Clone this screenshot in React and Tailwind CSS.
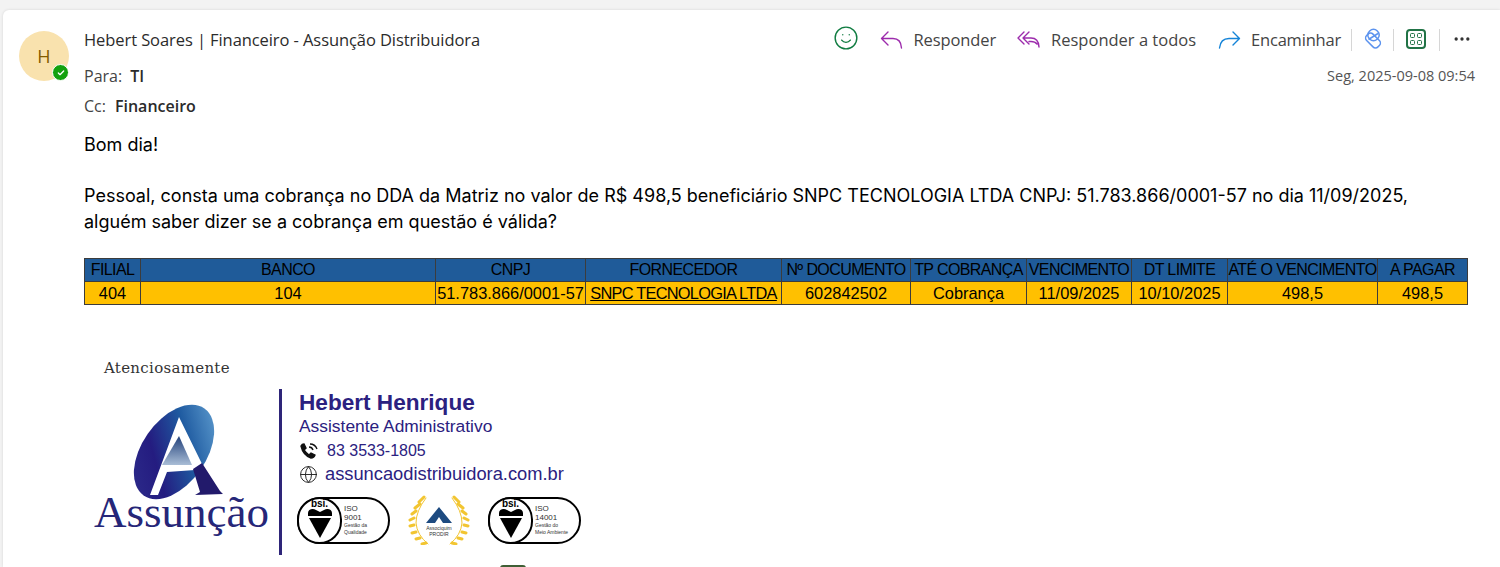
import React from "react";
import { Smile, MoreHorizontal, Check, Globe } from "lucide-react";

const headers = [
  ["FILIAL", "w-[56px]"],
  ["BANCO", "w-[295px]"],
  ["CNPJ", "w-[150px]"],
  ["FORNECEDOR", "w-[196px]"],
  ["Nº DOCUMENTO", "w-[129px]"],
  ["TP COBRANÇA", "w-[116px]"],
  ["VENCIMENTO", "w-[105px]"],
  ["DT LIMITE", "w-[96px]"],
  ["ATÉ O VENCIMENTO", "w-[150px]"],
  ["A PAGAR", "w-[90px]"],
];

const row = ["404", "104", "51.783.866/0001-57", "SNPC TECNOLOGIA LTDA", "602842502", "Cobrança", "11/09/2025", "10/10/2025", "498,5", "498,5"];

function ReplyIcon() {
  return (
    <svg width="24" height="20" viewBox="0 0 24 20" fill="none" stroke="#9c2bac" strokeWidth="1.4" strokeLinecap="round" strokeLinejoin="round">
      <path d="M8 2 L1.5 8.5 L8 15 M1.5 8.5 H13 Q21 8.5 21.5 18" />
    </svg>
  );
}

function ReplyAllIcon() {
  return (
    <svg width="24" height="20" viewBox="0 0 24 20" fill="none" stroke="#9c2bac" strokeWidth="1.4" strokeLinecap="round" strokeLinejoin="round">
      <path d="M7 2 L1 8 L7 14 M12 2 L6 8 L12 14 M6 8 H14 Q21.5 8 22 17 M12 11.5 H14 Q18 11.5 20 14" />
    </svg>
  );
}

function ForwardIcon() {
  return (
    <svg width="24" height="20" viewBox="0 0 24 20" fill="none" stroke="#1584d8" strokeWidth="1.4" strokeLinecap="round" strokeLinejoin="round">
      <path d="M15 2 L21.5 8.5 L15 15 M21.5 8.5 H11 Q2.5 8.5 1.5 18" />
    </svg>
  );
}

function LoopIcon() {
  return (
    <svg width="22" height="22" viewBox="0 0 22 22" fill="none" stroke="#5c93ee" strokeWidth="1.5" strokeLinejoin="round">
      <rect x="6" y="1.5" width="11" height="11" rx="5" transform="rotate(45 11.5 7)" />
      <rect x="3" y="8" width="16" height="9" rx="3.5" transform="rotate(45 11 12.5)" />
      <path d="M6.5 11.5 L16 5.5" />
    </svg>
  );
}

function AppsIcon() {
  return (
    <div className="h-[20px] w-[20px] rounded-[4px] border-2 border-[#217346] grid grid-cols-2 gap-[2px] p-[2px]">
      <span className="rounded-[1.5px] border-[1.5px] border-[#217346]" />
      <span className="rounded-[1.5px] border-[1.5px] border-[#217346]" />
      <span className="rounded-[1.5px] border-[1.5px] border-[#217346]" />
      <span className="rounded-[1.5px] border-[1.5px] border-[#217346]" />
    </div>
  );
}

function AssuncaoLogo() {
  return (
    <div className="flex flex-col w-[195px] pl-[10px]">
      <svg width="105" height="100" viewBox="0 0 105 100" className="ml-[31px] -mb-[10px]">
        <defs>
          <linearGradient id="oval" x1="0.75" y1="0" x2="0.25" y2="1">
            <stop offset="0" stopColor="#5a98cc" />
            <stop offset="0.35" stopColor="#1e5aa0" />
            <stop offset="0.7" stopColor="#241c80" />
            <stop offset="1" stopColor="#2c2a8a" />
          </linearGradient>
          <linearGradient id="inner" x1="0" y1="0" x2="0" y2="1">
            <stop offset="0" stopColor="#21407a" />
            <stop offset="1" stopColor="#a9bdd6" />
          </linearGradient>
        </defs>
        <ellipse cx="49" cy="52" rx="32" ry="53" transform="rotate(35 49 52)" fill="url(#oval)" />
        <path d="M54 17 L77 64 L70 70 L42 72 L33 95 L25 95 Z" fill="#fff" />
        <path d="M54 36 L67 65 L37 65 Z" fill="url(#inner)" />
        <path d="M68 69 L77 63 L95 91 L98 94 L70 95 L75 92 Z" fill="#221a6b" />
      </svg>
      <span className="relative font-['Liberation_Serif',serif] text-[45px] leading-[44px] text-[#262678]">Assunção</span>
    </div>
  );
}

function BsiBadge({ lines }) {
  return (
    <div className="relative h-[47px] w-[93px] rounded-full border-2 border-black flex items-center pl-[45px]">
      <div className="absolute -left-[2px] -top-[2px] h-[47px] w-[45px] rounded-full border-2 border-black bg-white flex flex-col items-center">
        <span className="text-[10px] leading-[10px] font-bold text-black">bsi.</span>
        <svg width="26" height="30" viewBox="0 0 26 30">
          <path d="M1 4 C1 0 6 -1 9 1 L13 3 L17 1 C20 -1 25 0 25 4 L25 7 L1 7 Z" fill="#000" />
          <path d="M2 9 L24 9 L13 29 Z" fill="#000" />
        </svg>
      </div>
      <div className="text-[#333] font-['Liberation_Sans',sans-serif]">
        {lines.map((line, i) => (
          <div key={i} className={i < 2 ? "text-[8px] leading-[9px]" : "text-[5px] leading-[7px]"}>{line}</div>
        ))}
      </div>
    </div>
  );
}

function Laurel() {
  return (
    <div className="relative h-[50px] w-[62px] flex flex-col items-center justify-center">
      <svg width="62" height="50" viewBox="0 0 62 50" className="absolute inset-0">
        <g stroke="#f2c531" strokeWidth="3" fill="none" strokeLinecap="round">
          <path d="M16 2 L11 7 M12 9 L7 13 M8 16 L4 19 M6 23 L2 25 M6 30 L2 31 M8 37 L4 38 M12 43 L8 44 M18 48 L14 49" />
          <path d="M18 3 Q8 16 8 28 Q9 40 20 49" strokeWidth="1" />
          <path d="M46 2 L51 7 M50 9 L55 13 M54 16 L58 19 M56 23 L60 25 M56 30 L60 31 M54 37 L58 38 M50 43 L54 44 M44 48 L48 49" />
          <path d="M44 3 Q54 16 54 28 Q53 40 42 49" strokeWidth="1" />
        </g>
        <path d="M31 12 L44 28 L35 28 L31 22 L27 28 L18 28 Z" fill="#1d4a80" />
      </svg>
      <div className="relative mt-[21px] text-[5px] leading-[6px] text-[#333] text-center font-['Liberation_Sans',sans-serif]">Associquim<br />PRODIR</div>
    </div>
  );
}

export default function App() {
  return (
    <div className="h-[567px] overflow-hidden bg-[#f3f3f3] pt-[10px] pl-[3px] font-['Open_Sans',sans-serif]">
      <div className="h-full rounded-tl-[6px] bg-white shadow-[0_0_3px_rgba(0,0,0,0.12)] pl-[16px] pr-[25px] pt-[20px]">
        <div className="flex">
          <div className="relative h-[50px] w-[50px] mt-px shrink-0 rounded-full bg-[#f9e2ae] flex items-center justify-center text-[18px] text-[#835b00]">
            H
            <span className="absolute right-0 bottom-0 h-[17px] w-[17px] rounded-full bg-[#13a10e] border border-white flex items-center justify-center">
              <Check size={8} strokeWidth={4} className="text-white" />
            </span>
          </div>
          <div className="ml-[15px] flex-1">
            <div className="flex justify-between items-center h-[20px]">
              <div className="text-[16.5px] leading-[20px] tracking-[-0.08px] text-[#2b2b2b]">Hebert Soares | Financeiro - Assunção Distribuidora</div>
              <div className="flex items-center h-[20px] mr-[3px] text-[#444] text-[16.5px] leading-[20px]">
                <Smile size={26} strokeWidth={1.3} className="-mt-[5px] text-[#107c41]" />
                <span className="ml-[21px]"><ReplyIcon /></span>
                <span className="ml-[9px] tracking-[-0.1px]">Responder</span>
                <span className="ml-[21px]"><ReplyAllIcon /></span>
                <span className="ml-[10px]">Responder a todos</span>
                <span className="ml-[22px]"><ForwardIcon /></span>
                <span className="ml-[9px] tracking-[-0.2px]">Encaminhar</span>
                <div className="ml-[10px] h-[22px] w-px bg-[#d6d6d6]" />
                <span className="ml-[10px] -mt-[3px]"><LoopIcon /></span>
                <div className="ml-[9px] h-[22px] w-px bg-[#d6d6d6]" />
                <span className="ml-[12px] -mt-[2px]"><AppsIcon /></span>
                <div className="ml-[13px] h-[22px] w-px bg-[#d6d6d6]" />
                <MoreHorizontal size={20} className="ml-[12px] -mt-[2px] text-[#333]" />
              </div>
            </div>
            <div className="mt-[16px] flex justify-between items-center h-[20px]">
              <div className="text-[16px] leading-[20px] text-[#444]">
                Para:<span className="ml-[8px] text-[#2b2b2b] font-semibold">TI</span>
              </div>
              <div className="text-[14.5px] -mt-px text-[#555]">Seg, 2025-09-08 09:54</div>
            </div>
            <div className="mt-[10px] text-[16px] leading-[20px] text-[#444]">
              Cc:<span className="ml-[9px] text-[#2b2b2b] font-semibold">Financeiro</span>
            </div>
          </div>
        </div>

        <div className="ml-[65px] mt-[16px] text-[18px] leading-[26px] text-black font-['Inter',sans-serif]">
          <p>Bom dia!</p>
          <p className="mt-[25px] w-[1340px] leading-[25.5px]">
            Pessoal, consta uma cobrança no DDA da Matriz no valor de R$ 498,5 beneficiário SNPC TECNOLOGIA LTDA CNPJ: 51.783.866/0001-57 no dia 11/09/2025, alguém saber dizer se a cobrança em questão é válida?
          </p>
        </div>

        <table className="ml-[65px] mt-[24px] table-fixed w-[1383px] border-collapse font-['Liberation_Sans',sans-serif] leading-[22px] text-black">
          <thead>
            <tr className="bg-[#1f5b99]">
              {headers.map(([label, width]) => (
                <th key={label} className={`${width} border border-[#3c3c3c] h-[23px] p-0 text-center text-[16px] font-normal whitespace-nowrap overflow-hidden tracking-[-0.6px]`}>{label}</th>
              ))}
            </tr>
          </thead>
          <tbody>
            <tr className="bg-[#ffc000]">
              {row.map((cell, i) => (
                <td key={i} className={`border border-[#3c3c3c] h-[23px] p-0 text-center text-[16.4px] leading-[20px] whitespace-nowrap overflow-hidden ${i === 3 ? "underline tracking-[-0.75px]" : ""}`}>{cell}</td>
              ))}
            </tr>
          </tbody>
        </table>

        <div className="ml-[85px] mt-[53px] font-['DejaVu_Serif',serif] text-[15px] leading-[20px] tracking-[0.3px] text-[#333]">Atenciosamente</div>

        <div className="ml-[65px] mt-[11px] flex">
          <div className="w-[195px] pt-[11px]">
            <AssuncaoLogo />
          </div>
          <div className="w-[3px] h-[166px] shrink-0 bg-[#2e2579]" />
          <div className="ml-[17px] pt-px text-[#2b2180] font-['Liberation_Sans',sans-serif]">
            <div className="text-[22.6px] leading-[26px] font-bold">Hebert Henrique</div>
            <div className="mt-[1px] text-[17.4px] leading-[19px]">Assistente Administrativo</div>
            <div className="mt-[5px] flex items-center text-[16px] leading-[20px]">
              <svg width="20" height="18" viewBox="0 0 20 18" fill="none" stroke="#111" strokeWidth="1.4">
                <path d="M2 4 Q3 2 5 2 L7 6 L5 8 Q7 11 10 13 L12 11 L16 13 Q15 16 12 16 Q4 13 2 4 Z" fill="#111" />
                <path d="M10 5 Q13 5 14 8 M11 2 Q16 2 18 7" />
              </svg>
              <span className="ml-[8px]">83 3533-1805</span>
            </div>
            <div className="mt-[1px] flex items-center text-[18.3px] leading-[24px]">
              <Globe size={19} strokeWidth={1.2} className="text-[#222]" />
              <span className="ml-[7px]">assuncaodistribuidora.com.br</span>
            </div>
            <div className="mt-[9px] flex items-center -ml-[2px]">
              <BsiBadge lines={["ISO", "9001", "Gestão da", "Qualidade"]} />
              <div className="ml-[18px]"><Laurel /></div>
              <div className="ml-[18px]"><BsiBadge lines={["ISO", "14001", "Gestão do", "Meio Ambiente"]} /></div>
            </div>
            <div className="ml-[201px] mt-[20px] h-[3px] w-[26px] rounded-t-full bg-[#3f5f35]" />
          </div>
        </div>
      </div>
    </div>
  );
}
